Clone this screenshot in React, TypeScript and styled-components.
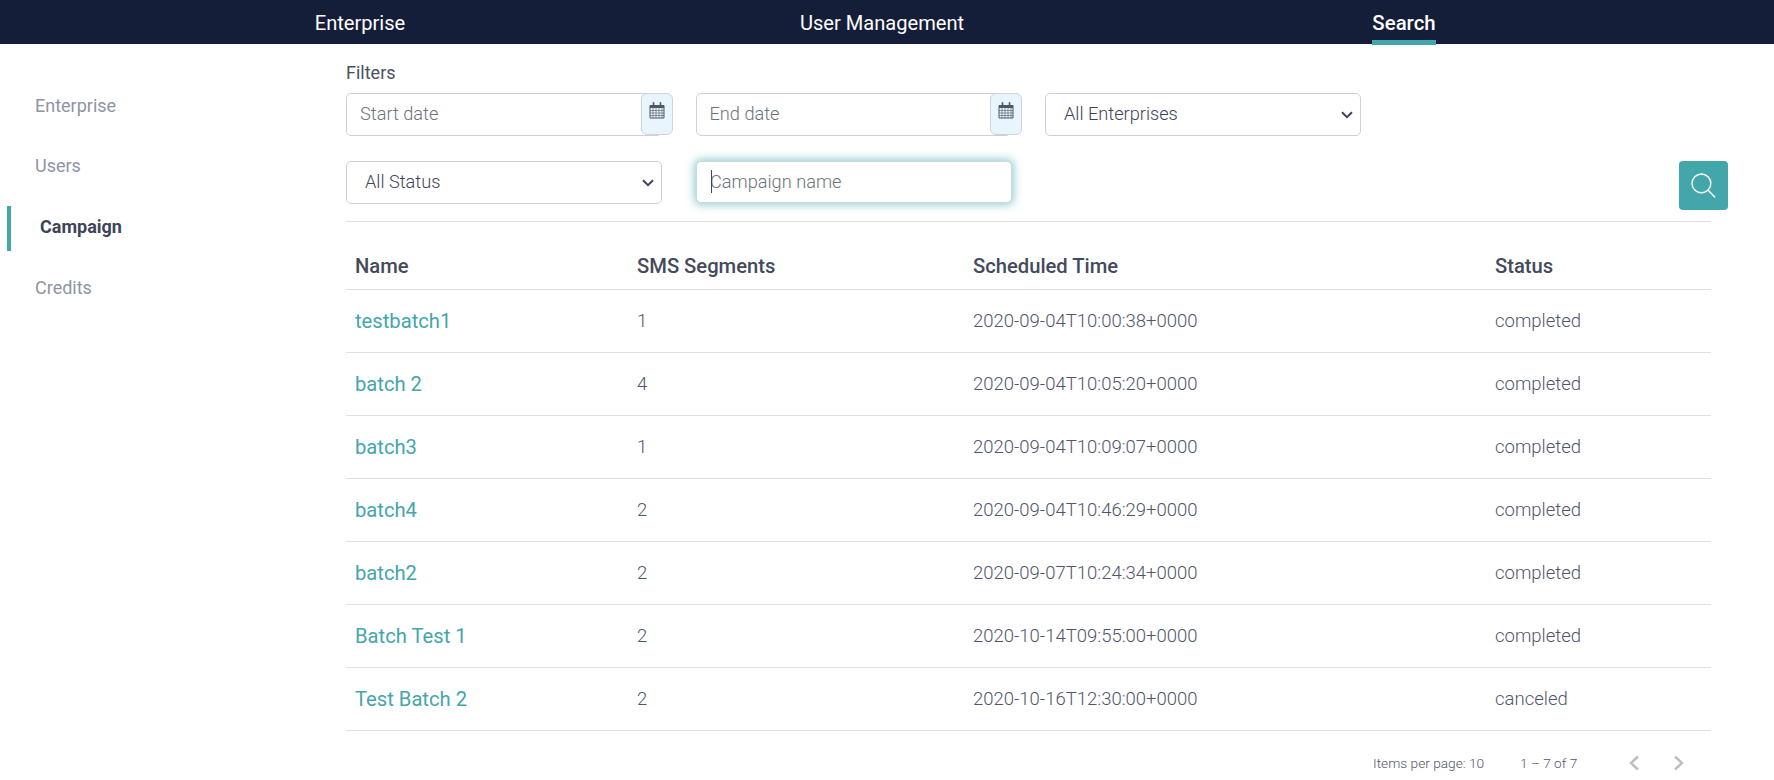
import React from "react";
import styled, { createGlobalStyle } from "styled-components";

interface Campaign {
  name: string;
  segments: number;
  time: string;
  status: string;
}

const NAV_ITEMS = ["Enterprise", "User Management", "Search"];
const SIDE_ITEMS = ["Enterprise", "Users", "Campaign", "Credits"];

const CAMPAIGNS: Campaign[] = [
  { name: "testbatch1", segments: 1, time: "2020-09-04T10:00:38+0000", status: "completed" },
  { name: "batch 2", segments: 4, time: "2020-09-04T10:05:20+0000", status: "completed" },
  { name: "batch3", segments: 1, time: "2020-09-04T10:09:07+0000", status: "completed" },
  { name: "batch4", segments: 2, time: "2020-09-04T10:46:29+0000", status: "completed" },
  { name: "batch2", segments: 2, time: "2020-09-07T10:24:34+0000", status: "completed" },
  { name: "Batch Test 1", segments: 2, time: "2020-10-14T09:55:00+0000", status: "completed" },
  { name: "Test Batch 2", segments: 2, time: "2020-10-16T12:30:00+0000", status: "canceled" },
];

const CalendarIcon = () => (
  <svg width="16" height="17" viewBox="0 0 16 17" fill="none">
    <path d="M1 3.5h14v12.5H1z" fill="none" stroke="#4f5669" strokeWidth="1" />
    <path d="M1 3h14v3H1z" fill="#4f5669" />
    <path d="M1 8.5h14M1 11h14M1 13.5h14M4 6v10M7 6v10M10 6v10M13 6v10" stroke="#4f5669" strokeWidth="0.6" />
    <path d="M4.5 0.8v3M11.5 0.8v3" stroke="#4f5669" strokeWidth="1.6" strokeLinecap="round" />
  </svg>
);

const SearchIcon = () => (
  <svg width="25" height="25" viewBox="0 0 24 24" fill="none" stroke="#fff" strokeWidth="1.4">
    <circle cx="10" cy="10" r="9" />
    <path d="M16.5 16.5 22.8 23" strokeLinecap="round" />
  </svg>
);

const PageChevron = ({ next }: { next?: boolean }) => (
  <svg width="14" height="16" viewBox="0 0 14 16" fill="none" stroke="#bdbdbd" strokeWidth="2.4">
    <path d={next ? "M3 1.5 10 8l-7 6.5" : "M11 1.5 4 8l7 6.5"} />
  </svg>
);

const FilterSelect = ({ label }: { label: string }) => (
  <SelectField>
    <Select defaultValue="all">
      <option value="all">{label}</option>
    </Select>
    <SelectArrow width="12" height="8" viewBox="0 0 12 8" fill="none" stroke="#3e4459" strokeWidth="2">
      <path d="M1 1.2 6 6.2l5-5" />
    </SelectArrow>
  </SelectField>
);

const App: React.FC = () => {
  return (
    <>
      <GlobalStyle />
      <TopBar>
        {NAV_ITEMS.map((item) => (
          <NavLink key={item} $active={item === "Search"}>
            {item}
          </NavLink>
        ))}
      </TopBar>

      <Layout>
        <Sidebar>
          {SIDE_ITEMS.map((item) => (
            <SideLink key={item} $active={item === "Campaign"}>
              {item}
            </SideLink>
          ))}
        </Sidebar>

        <Content>
          <FilterTitle>Filters</FilterTitle>

          <FilterRow>
            <DateField>
              <TextInput placeholder="Start date" />
              <CalendarButton>
                <CalendarIcon />
              </CalendarButton>
            </DateField>
            <DateField>
              <TextInput placeholder="End date" />
              <CalendarButton>
                <CalendarIcon />
              </CalendarButton>
            </DateField>
            <FilterSelect label="All Enterprises" />
          </FilterRow>

          <SecondRow>
            <FilterSelect label="All Status" />
            <FocusField>
              <FocusInput placeholder="Campaign name" />
              <Caret />
            </FocusField>
            <SearchButton aria-label="Search">
              <SearchIcon />
            </SearchButton>
          </SecondRow>

          <Table>
            <thead>
              <tr>
                <HeadCell $width={282}>Name</HeadCell>
                <HeadCell $width={336}>SMS Segments</HeadCell>
                <HeadCell $width={522}>Scheduled Time</HeadCell>
                <HeadCell>Status</HeadCell>
              </tr>
            </thead>
            <tbody>
              {CAMPAIGNS.map((row) => (
                <tr key={row.time}>
                  <NameCell>{row.name}</NameCell>
                  <Cell>{row.segments}</Cell>
                  <Cell>{row.time}</Cell>
                  <Cell>{row.status}</Cell>
                </tr>
              ))}
            </tbody>
          </Table>

          <Pagination>
            <PageLabel>Items per page: 10</PageLabel>
            <RangeLabel>1 – 7 of 7</RangeLabel>
            <PageButtons>
              <PageChevron />
              <PageChevron next />
            </PageButtons>
          </Pagination>
        </Content>
      </Layout>
    </>
  );
};

export default App;

const GlobalStyle = createGlobalStyle`
  html,
  body {
    margin: 0;
    padding: 0;
    background: #fff;
    overflow: hidden;
    font-family: Roboto, "Liberation Sans", sans-serif;
    color: #3e4459;
  }

  * {
    box-sizing: border-box;
  }
`;

const TopBar = styled.header`
  display: grid;
  grid-template-columns: repeat(3, 522px);
  justify-items: center;
  height: 44px;
  padding-left: 99px;
  background: #151e38;
`;

const NavLink = styled.a<{ $active?: boolean }>`
  display: block;
  height: 45px;
  padding-top: 11px;
  font-size: ${(p) => (p.$active ? "20.4px" : "20.1px")};
  line-height: 24px;
  font-weight: ${(p) => (p.$active ? 500 : 400)};
  color: #fff;
  border-bottom: ${(p) => (p.$active ? "5px solid #43a6ab" : "none")};
`;

const Layout = styled.div`
  display: flex;
`;

const Sidebar = styled.nav`
  display: flex;
  flex-direction: column;
  width: 346px;
  padding: 31px 0 0 7px;
`;

const SideLink = styled.a<{ $active?: boolean }>`
  display: flex;
  align-items: center;
  height: ${(p) => (p.$active ? "45px" : "60px")};
  margin: ${(p) => (p.$active ? "11px 0 6px" : "0")};
  padding-left: ${(p) => (p.$active ? "29px" : "24px")};
  padding-bottom: ${(p) => (p.$active ? "5px" : "0")};
  font-size: 18px;
  font-weight: ${(p) => (p.$active ? 700 : 400)};
  color: ${(p) => (p.$active ? "#3e4459" : "#8f94a3")};
  border-left: ${(p) => (p.$active ? "4px solid #43a6ab" : "4px solid transparent")};
`;

const Content = styled.main`
  width: 1382px;
`;

const FilterTitle = styled.div`
  padding-top: 18px;
  height: 49px;
  font-size: 18px;
  line-height: 22px;
  color: #4a5063;
`;

const FilterRow = styled.div`
  display: flex;
  gap: 24px;
  height: 68px;
`;

const SecondRow = styled(FilterRow)`
  height: 60px;
  gap: 34px;
`;

const DateField = styled.div`
  display: flex;
  width: 325.5px;
  height: 43px;
`;

const TextInput = styled.input`
  width: 315.5px;
  flex: none;
  height: 43px;
  padding: 0 13px 2px;
  border: 1px solid #ced0d4;
  border-radius: 5px;
  font-family: inherit;
  font-size: 18.2px;
  font-weight: 300;
  color: #3e4459;
  outline: none;

  &::placeholder {
    color: #6c727c;
    opacity: 1;
  }
`;

const CalendarButton = styled.span`
  display: flex;
  justify-content: center;
  flex: none;
  width: 32px;
  height: 42px;
  margin-left: -21px;
  padding-top: 8px;
  background: #e9f5fc;
  border: 1px solid #ced4da;
  border-radius: 6px;
`;

const SelectField = styled.div`
  position: relative;
  width: 316px;
  height: 43px;
`;

const Select = styled.select`
  width: 100%;
  height: 100%;
  padding: 0 18px 2px;
  appearance: none;
  background: #fff;
  border: 1px solid #ced0d4;
  border-radius: 5px;
  font-family: inherit;
  font-size: 18.2px;
  font-weight: 300;
  color: #3e4459;
`;

const SelectArrow = styled.svg`
  position: absolute;
  right: 8px;
  top: 18px;
  pointer-events: none;
`;

const FocusField = styled.div`
  position: relative;
  width: 316px;
  height: 42px;
`;

const FocusInput = styled(TextInput)`
  width: 100%;
  height: 42px;
  border-color: #c8dadc;
  box-shadow: 0 0 8px 2px rgba(67, 166, 171, 0.55);
`;

const Caret = styled.span`
  position: absolute;
  left: 15px;
  top: 9px;
  width: 1px;
  height: 23px;
  background: #3e4459;
`;

const SearchButton = styled.button`
  display: flex;
  align-items: center;
  justify-content: center;
  width: 49px;
  height: 49px;
  margin-left: auto;
  padding: 0;
  background: #43a6ab;
  border: none;
  border-radius: 4px;
`;

const Table = styled.table`
  width: 1365px;
  border-collapse: collapse;
  table-layout: fixed;
  border-top: 1px solid #e0e0e0;
`;

const HeadCell = styled.th<{ $width?: number }>`
  width: ${(p) => (p.$width ? `${p.$width}px` : "auto")};
  height: 68px;
  padding: 20px 0 0 9px;
  text-align: left;
  font-size: 20.2px;
  font-weight: 500;
  color: #434a5c;
  border-bottom: 1px solid #e0e0e0;
`;

const Cell = styled.td`
  height: 63px;
  padding: 0 0 1px 9px;
  font-size: 18.5px;
  font-weight: 300;
  color: #50566a;
  border-bottom: 1px solid #e0e0e0;
`;

const NameCell = styled(Cell)`
  padding-bottom: 0;
  font-size: 20.2px;
  font-weight: 400;
  color: #43a6ab;
`;

const Pagination = styled.div`
  display: flex;
  align-items: center;
  height: 64px;
  width: 1365px;
  padding-left: 1027px;
  font-size: 13.7px;
  font-weight: 300;
  color: #50566a;
`;

const PageLabel = styled.span`
  width: 147px;
`;

const RangeLabel = styled.span`
  width: 107px;
`;

const PageButtons = styled.div`
  display: flex;
  gap: 31px;
`;
